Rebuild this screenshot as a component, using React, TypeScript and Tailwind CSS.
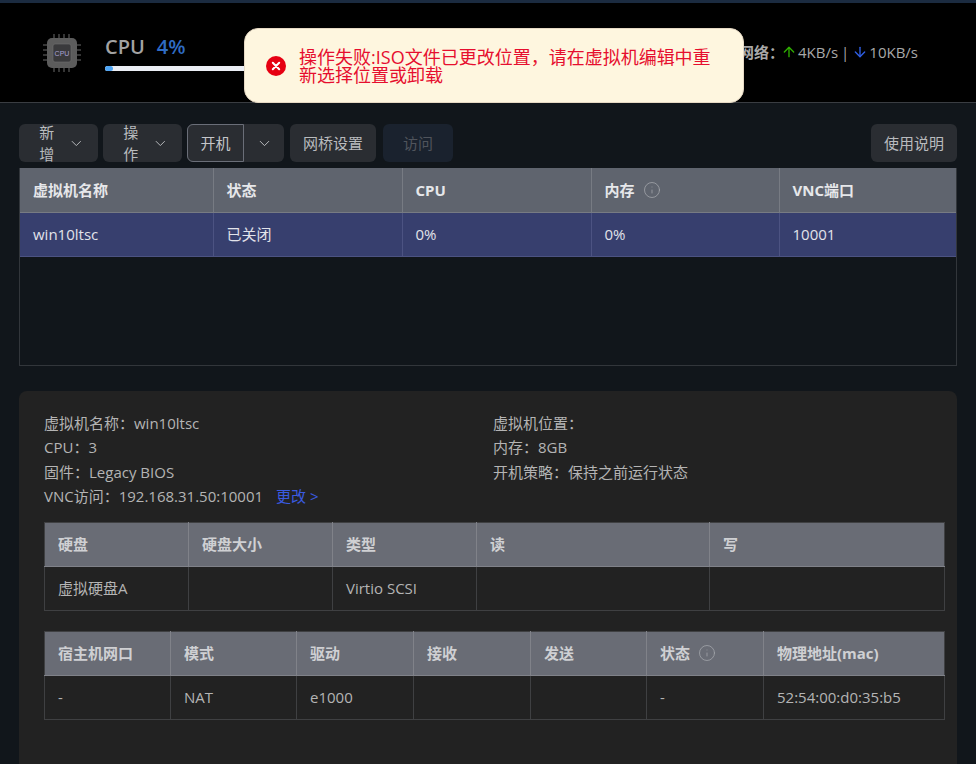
import React from 'react'
import { ChevronDown, ArrowUp, ArrowDown, Info } from 'lucide-react'

const font = "font-['Open_Sans','Noto_Sans_CJK_SC',sans-serif]"

function CpuIcon() {
  const legs = [0, 1, 2, 3]
  return (
    <svg width="38" height="40" viewBox="0 0 38 40" className="shrink-0">
      {legs.map((i) => (
        <g key={i} stroke="#6b6b6b" strokeWidth="1">
          <line x1={11 + i * 5} y1="1" x2={11 + i * 5} y2="6" />
          <line x1={11 + i * 5} y1="34" x2={11 + i * 5} y2="39" />
          <line x1="0" y1={12 + i * 5} x2="5" y2={12 + i * 5} />
          <line x1="33" y1={12 + i * 5} x2="38" y2={12 + i * 5} />
        </g>
      ))}
      <rect x="4" y="5" width="30" height="30" rx="5" fill="#5c5c5c" />
      <rect x="10" y="11" width="18" height="18" rx="2" fill="#3a3a3c" stroke="#6e6e6e" strokeWidth="0.6" />
      <text x="19" y="23" textAnchor="middle" fontSize="7" fill="#a9a3d6" fontFamily="Liberation Sans, sans-serif">CPU</text>
    </svg>
  )
}

function ToolButton({ label, chevron }: { label: string; chevron?: boolean }) {
  return (
    <button className="h-[38px] px-[13px] flex items-center justify-center gap-[7px] rounded-md bg-[#2a2d32] text-[15px] text-[#b9bbbe]">
      {label}
      {chevron && <ChevronDown size={17} strokeWidth={1.4} />}
    </button>
  )
}

function HeadCell({ children, tone }: { children: React.ReactNode; tone: 'main' | 'sub' }) {
  return (
    <th
      className={
        tone === 'main'
          ? 'h-[44px] px-[13px] text-left text-[15px] font-bold text-[#e6e7ea] border-r border-b border-[#777b83] last:border-r-0'
          : 'h-[44px] px-[13px] text-left text-[15px] font-bold text-[#cfd0d3] border-r border-b border-[#808289] last:border-r-0'
      }
    >
      {children}
    </th>
  )
}

function SubTable({ widths, head, row }: { widths: number[]; head: React.ReactNode[]; row: string[] }) {
  return (
    <table className="w-[900px] table-fixed border-collapse border border-[#3f4042]">
      <colgroup>
        {widths.map((w, i) => (
          <col key={i} style={{ width: w }} />
        ))}
      </colgroup>
      <thead className="bg-[#696c75]">
        <tr>
          {head.map((h, i) => (
            <HeadCell key={i} tone="sub">{h}</HeadCell>
          ))}
        </tr>
      </thead>
      <tbody>
        <tr>
          {row.map((c, i) => (
            <td key={i} className="h-[44px] px-[13px] text-[15px] text-[#b4b4b4] border-r border-[#3f4042] last:border-r-0">
              {c}
            </td>
          ))}
        </tr>
      </tbody>
    </table>
  )
}

const InfoMark = () => <Info size={18} strokeWidth={1} className="text-[#a6a8ad] ml-[8px] inline-block align-[-3px]" />

export default function App() {
  return (
    <div className={`relative h-[764px] w-[976px] overflow-hidden bg-[#11161b] ${font}`}>
      {/* top strip */}
      <div className="h-[3px] bg-[#1b2b40]" />

      {/* header */}
      <header className="h-[100px] bg-black border-b border-[#3a3d42] flex items-center justify-between pl-[43px] pr-[58px]">
        <div className="flex items-center gap-[24px]">
          <CpuIcon />
          <div>
            <div className="flex items-baseline gap-[12px] font-semibold text-[20px] leading-[26px] mb-[6px]">
              <span className="text-[#a3a3a3]">CPU</span>
              <span className="text-[#2f6cc4]">4%</span>
            </div>
            <div className="w-[200px] h-[5px] rounded-full bg-[#ebeef5]">
              <div className="w-[8px] h-[5px] rounded-full bg-[#4ea5f5]" />
            </div>
          </div>
        </div>
        <div className="flex items-center text-[15px] text-[#a8a8a8] mb-[1px]">
          <span className="font-bold">网络：</span>
          <ArrowUp size={16} strokeWidth={2} className="text-[#2fae00] -ml-[3px] mr-[1px]" />
          <span>4KB/s</span>
          <span className="mx-[3px]">|</span>
          <ArrowDown size={16} strokeWidth={2} className="text-[#2f5fe6] mr-[1px]" />
          <span>10KB/s</span>
        </div>
      </header>

      {/* toast */}
      <div className="absolute left-[244px] top-[28px] w-[500px] h-[75px] rounded-[14px] bg-[#fef6df] border border-[#e6d9c4] flex items-center pl-[21px] pr-[20px] gap-[13px]">
        <svg width="20" height="20" viewBox="0 0 20 20" className="shrink-0">
          <circle cx="10" cy="10" r="10" fill="#e60012" />
          <path d="M6.8 6.8 13.2 13.2M13.2 6.8 6.8 13.2" stroke="#fff" strokeWidth="2" strokeLinecap="round" />
        </svg>
        <p className="text-[18px] leading-[18px] text-[#e60e2e]">操作失败:ISO文件已更改位置，请在虚拟机编辑中重新选择位置或卸载</p>
      </div>

      {/* toolbar */}
      <div className="flex items-center px-[19px] pt-[15px] h-[65px] gap-[5px] text-[15px]">
        <div className="w-[79px] flex"><div className="w-full"><ToolButton label="新增" chevron /></div></div>
        <div className="w-[79px] flex"><div className="w-full"><ToolButton label="操作" chevron /></div></div>
        <div className="ml-[0px] flex h-[38px] w-[97px] rounded-md bg-[#2a2d32] text-[#b9bbbe]">
          <button className="w-[57px] h-full rounded-l-md border border-[#6a6e78] text-[#c4c6c9]">开机</button>
          <button className="flex-1 flex items-center justify-center"><ChevronDown size={17} strokeWidth={1.4} /></button>
        </div>
        <div className="ml-[1px]"><ToolButton label="网桥设置" /></div>
        <button className="ml-[2px] h-[38px] w-[70px] rounded-md bg-[#1a222e] text-[#50545c]">访问</button>
        <div className="ml-auto"><ToolButton label="使用说明" /></div>
      </div>

      {/* vm table */}
      <div className="mx-[19px] h-[198px] border-x border-b border-[#32363b]">
        <table className="w-full table-fixed border-collapse">
          <colgroup>
            <col className="w-[193px]" />
            <col className="w-[189px]" />
            <col className="w-[189px]" />
            <col className="w-[188px]" />
            <col />
          </colgroup>
          <thead className="bg-[#5f646e]">
            <tr>
              <HeadCell tone="main">虚拟机名称</HeadCell>
              <HeadCell tone="main">状态</HeadCell>
              <HeadCell tone="main">CPU</HeadCell>
              <HeadCell tone="main">内存<InfoMark /></HeadCell>
              <HeadCell tone="main">VNC端口</HeadCell>
            </tr>
          </thead>
          <tbody>
            <tr className="bg-[#373f6e]">
              {['win10ltsc', '已关闭', '0%', '0%', '10001'].map((c, i) => (
                <td key={i} className="h-[44px] px-[13px] text-[15px] text-[#e2e3ea] border-r border-b border-[#4c5382] last:border-r-0">
                  {c}
                </td>
              ))}
            </tr>
          </tbody>
        </table>
      </div>

      {/* detail panel */}
      <section className="mx-[19px] mt-[25px] h-[400px] rounded-t-lg bg-[#222222] px-[25px] pt-[20px]">
        <div className="grid grid-cols-[449px_1fr] text-[15px] leading-[24.4px] text-[#b4b4b4] mb-[13px]">
          <div>虚拟机名称：win10ltsc</div>
          <div>虚拟机位置：</div>
          <div>CPU：3</div>
          <div>内存：8GB</div>
          <div>固件：Legacy BIOS</div>
          <div>开机策略：保持之前运行状态</div>
          <div>
            VNC访问：192.168.31.50:10001
            <span className="ml-[13px] text-[#3a5be0]">更改 &gt;</span>
          </div>
        </div>

        <div className="mb-[20px]">
          <SubTable
            widths={[144, 144, 144, 233, 235]}
            head={['硬盘', '硬盘大小', '类型', '读', '写']}
            row={['虚拟硬盘A', '', 'Virtio SCSI', '', '']}
          />
        </div>
        <SubTable
          widths={[126, 126, 117, 117, 116, 117, 181]}
          head={['宿主机网口', '模式', '驱动', '接收', '发送', <>状态<InfoMark /></>, '物理地址(mac)']}
          row={['-', 'NAT', 'e1000', '', '', '-', '52:54:00:d0:35:b5']}
        />
      </section>
    </div>
  )
}
